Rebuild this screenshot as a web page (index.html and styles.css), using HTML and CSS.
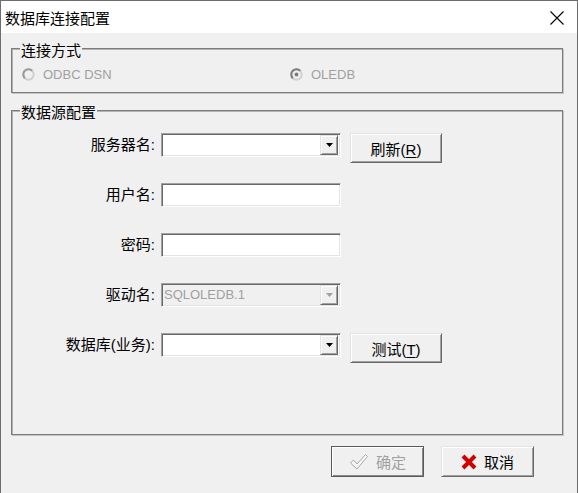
FILE: index.html
```html
<!DOCTYPE html>
<html lang="zh-CN">
<head>
    <meta charset="UTF-8">
    <title>数据库连接配置</title>
    <link rel="stylesheet" href="styles.css">
</head>
<body>

<div class="window">
    <div class="titlebar">
        <span class="title">数据库连接配置</span>
        <svg class="close" width="14" height="14" viewBox="0 0 14 14">
            <path d="M0.5 0.5 L13.5 13.5 M13.5 0.5 L0.5 13.5" stroke="#000" stroke-width="1.1" fill="none"/>
        </svg>
    </div>

    <div class="client">
        <div class="group mode">
            <span class="legend">连接方式</span>
            <div class="radios">
                <div class="radio">
                    <svg width="13" height="13" viewBox="0 0 13 13">
                        <circle cx="6.5" cy="6.5" r="5.2" stroke="#d0d0d0" stroke-width="2" fill="#f0f0f0"/>
                        <path d="M2.8 10.2 A5.2 5.2 0 0 1 10.2 2.8" stroke="#9a9a9a" stroke-width="2" fill="none"/>
                    </svg>
                    <span>ODBC DSN</span>
                </div>
                <div class="radio">
                    <svg width="13" height="13" viewBox="0 0 13 13">
                        <circle cx="6.5" cy="6.5" r="5.2" stroke="#d0d0d0" stroke-width="2" fill="#f0f0f0"/>
                        <path d="M2.8 10.2 A5.2 5.2 0 0 1 10.2 2.8" stroke="#7c7c7c" stroke-width="2" fill="none"/>
                        <circle cx="6.5" cy="6.5" r="1.9" fill="#7c7c7c"/>
                    </svg>
                    <span>OLEDB</span>
                </div>
            </div>
        </div>

        <div class="group source">
            <span class="legend">数据源配置</span>
            <div class="form">
                <div class="row">
                    <label>服务器名:</label>
                    <div class="field combo">
                        <span class="value"></span>
                        <span class="drop"><svg width="7" height="4" viewBox="0 0 7 4"><polygon points="0,0 7,0 3.5,4" fill="#000"/></svg></span>
                    </div>
                    <button class="btn">刷新(<u>R</u>)</button>
                </div>
                <div class="row">
                    <label>用户名:</label>
                    <div class="field"></div>
                </div>
                <div class="row">
                    <label>密码:</label>
                    <div class="field"></div>
                </div>
                <div class="row">
                    <label>驱动名:</label>
                    <div class="field combo disabled">
                        <span class="value">SQLOLEDB.1</span>
                        <span class="drop"><svg width="7" height="4" viewBox="0 0 7 4"><polygon points="0,0 7,0 3.5,4" fill="#a0a0a0"/></svg></span>
                    </div>
                </div>
                <div class="row">
                    <label>数据库(业务):</label>
                    <div class="field combo">
                        <span class="value"></span>
                        <span class="drop"><svg width="7" height="4" viewBox="0 0 7 4"><polygon points="0,0 7,0 3.5,4" fill="#000"/></svg></span>
                    </div>
                    <button class="btn">测试(<u>T</u>)</button>
                </div>
            </div>
        </div>

        <div class="actions">
            <button class="action ok">
                <svg width="20" height="18" viewBox="0 0 20 18">
                    <path d="M1.5 10 L4.5 7 L8 11 L16.5 1.5 L18.5 3.5 L8 16 Z" fill="#f7f7f7" stroke="#a8a8a8" stroke-width="1" stroke-linejoin="round"/>
                </svg>
                <span>确定</span>
            </button>
            <button class="action cancel">
                <svg width="16" height="16" viewBox="0 0 16 16">
                    <path d="M2 2 L14 14 M14 2 L2 14" stroke="#d10000" stroke-width="4" fill="none"/>
                </svg>
                <span>取消</span>
            </button>
        </div>
    </div>
</div>

</body>
</html>
```

FILE: styles.css
```css
* {
    box-sizing: border-box;
}

body {
    margin: 0;
    background: #f0f0f0;
    color: #000;
    font-family: "Liberation Sans", "Noto Sans CJK SC", sans-serif;
}

.window {
    width: 578px;
    height: 493px;
    border: 1px solid #6d6d6d;
    border-bottom: none;
    background: #f0f0f0;
}

.titlebar {
    height: 32px;
    background: #fff;
    display: flex;
    align-items: center;
    justify-content: space-between;
    padding: 0 13px 0 4px;
}

.title {
    font-size: 15px;
}

.close {
    margin-top: 1px;
}

.client {
    padding: 15px 14px 0 10px;
}

.group {
    position: relative;
    border: 1px solid #7c7c7c;
    box-shadow: inset 1px 1px 0 #b4b4b4, 1px 1px 0 #c4c4c4;
}

.mode {
    height: 45px;
}

.source {
    height: 325px;
    margin-top: 17px;
}

.legend {
    position: absolute;
    top: -6px;
    left: 8px;
    padding: 0 1px;
    background: #f0f0f0;
    font-size: 15px;
    line-height: 16px;
}

.radios {
    display: flex;
    padding: 17px 0 0 10px;
}

.radio {
    display: flex;
    align-items: center;
    gap: 8px;
    height: 16px;
    color: #a0a0a0;
    font-size: 13px;
}

.radio:first-child {
    width: 268px;
}

.form {
    display: flex;
    flex-direction: column;
    gap: 26px;
    padding-top: 22px;
}

.row {
    display: flex;
    align-items: flex-start;
    height: 24px;
}

.row label {
    width: 143px;
    margin-right: 6px;
    text-align: right;
    font-size: 15px;
    line-height: 24px;
}

.field {
    width: 180px;
    height: 24px;
    background: #fff;
    border: 1px solid;
    border-color: #a0a0a0 #fff #fff #a0a0a0;
    box-shadow: inset 1px 1px 0 #696969, inset -1px -1px 0 #e3e3e3;
}

.combo {
    display: flex;
    justify-content: space-between;
    padding: 1px 2px 1px 1px;
}

.combo.disabled {
    background: #f0f0f0;
}

.value {
    padding-left: 1px;
    font-size: 13px;
    line-height: 20px;
    color: #a0a0a0;
}

.drop {
    width: 18px;
    height: 20px;
    display: flex;
    align-items: center;
    justify-content: center;
    background: #f0f0f0;
    border: 1px solid;
    border-color: #e3e3e3 #696969 #696969 #e3e3e3;
    box-shadow: inset 1px 1px 0 #fff, inset -1px -1px 0 #a0a0a0;
}

.btn {
    width: 92px;
    height: 30px;
    margin-left: 9px;
    padding: 0;
    font: inherit;
    font-size: 15px;
    color: #000;
    background: #f0f0f0;
    border: 1px solid;
    border-color: #e3e3e3 #696969 #696969 #e3e3e3;
    box-shadow: inset 1px 1px 0 #fff, inset -1px -1px 0 #a0a0a0;
}

.btn u {
    text-underline-offset: 2px;
}

.actions {
    display: flex;
    justify-content: flex-end;
    gap: 17px;
    padding: 11px 29px 0 0;
}

.action {
    width: 93px;
    height: 31px;
    display: flex;
    align-items: center;
    justify-content: center;
    gap: 7px;
    padding: 0;
    font: inherit;
    font-size: 15px;
    background: #f0f0f0;
}

.ok {
    color: #a0a0a0;
    border: 1px solid #5a5a5a;
    box-shadow: inset 1px 1px 0 #fff, inset -1px -1px 0 #8a8a8a;
}

.cancel {
    color: #000;
    border: 1px solid;
    border-color: #e3e3e3 #696969 #696969 #e3e3e3;
    box-shadow: inset 1px 1px 0 #fff, inset -1px -1px 0 #a0a0a0;
}
```
